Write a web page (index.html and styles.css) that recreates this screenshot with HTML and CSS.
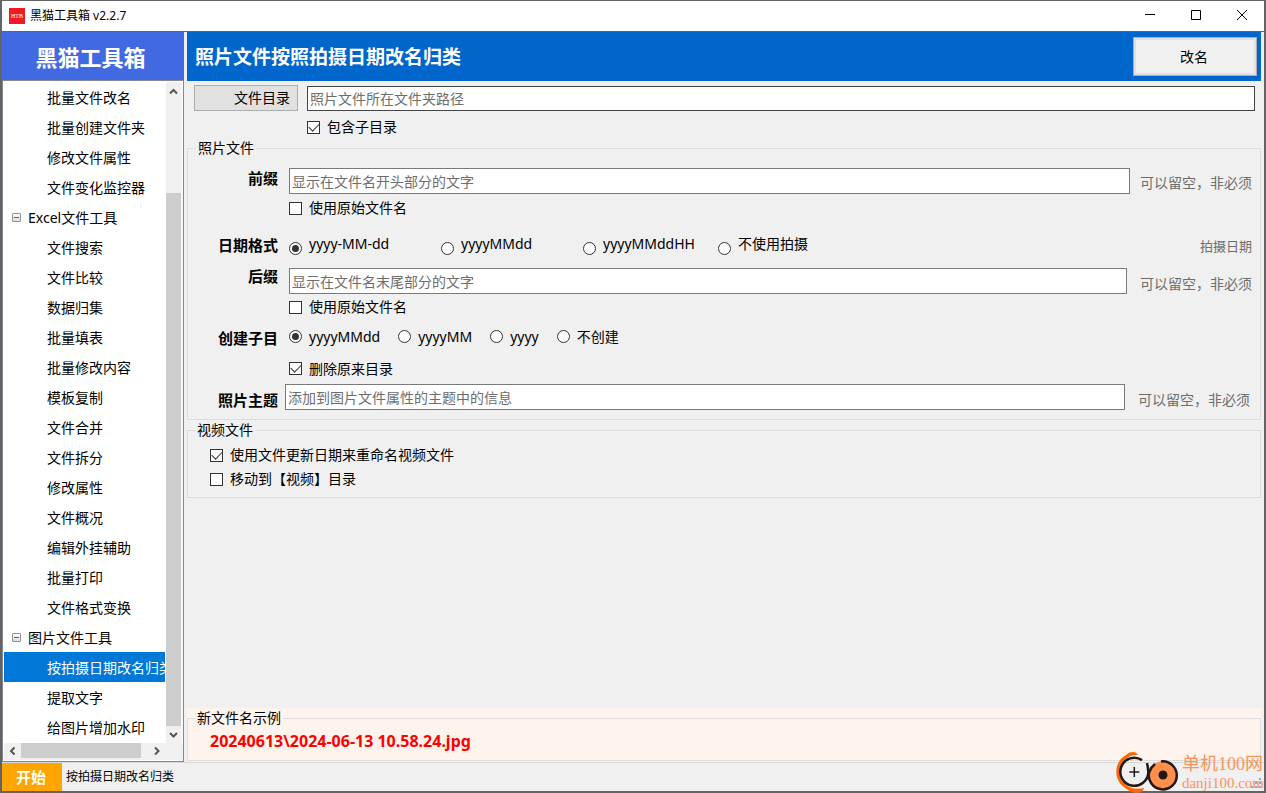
FILE: index.html
```html
<!DOCTYPE html>
<html lang="zh-CN">
<head>
<meta charset="utf-8">
<title>黑猫工具箱 v2.2.7</title>
<link rel="stylesheet" href="styles.css">
</head>
<body>
<div class="window">
  <header class="titlebar">
    <svg class="app-icon" viewBox="0 0 16 16" aria-hidden="true"><rect width="16" height="16" fill="#ed1c24"/><text x="8" y="10" text-anchor="middle" class="app-icon-text">HTB</text></svg>
    <span class="titlebar-text">黑猫工具箱 v2.2.7</span>
    <div class="caption-buttons">
      <button type="button" aria-label="最小化"><svg viewBox="0 0 12 12"><path d="M1 5.500H11"/></svg></button>
      <button type="button" aria-label="最大化"><svg viewBox="0 0 12 12"><path d="M1.500 1.500h9v9h-9z"/></svg></button>
      <button type="button" aria-label="关闭"><svg viewBox="0 0 12 12"><path d="M1 1l10 10M11 1L1 11"/></svg></button>
    </div>
  </header>

  <div class="workspace">
    <aside class="sidebar">
      <h1 class="brand">黑猫工具箱</h1>
      <div class="tree">
        <ul class="tree-list">
          <li>批量文件改名</li>
          <li>批量创建文件夹</li>
          <li>修改文件属性</li>
          <li>文件变化监控器</li>
          <li class="group"><span class="toggle"></span>Excel文件工具</li>
          <li>文件搜索</li>
          <li>文件比较</li>
          <li>数据归集</li>
          <li>批量填表</li>
          <li>批量修改内容</li>
          <li>模板复制</li>
          <li>文件合并</li>
          <li>文件拆分</li>
          <li>修改属性</li>
          <li>文件概况</li>
          <li>编辑外挂辅助</li>
          <li>批量打印</li>
          <li>文件格式变换</li>
          <li class="group"><span class="toggle"></span>图片文件工具</li>
          <li class="selected">按拍摄日期改名归类</li>
          <li>提取文字</li>
          <li>给图片增加水印</li>
        </ul>
        <div class="scroll scroll-v">
          <svg class="arrow" viewBox="0 0 17 17"><path d="M4 11.500L7.500 8l3.500 3.500"/></svg>
          <div class="track-v"><div class="thumb-v"></div></div>
          <svg class="arrow" viewBox="0 0 17 17"><path d="M4 7l3.500 3.500L11 7"/></svg>
        </div>
        <div class="scroll scroll-h">
          <svg class="arrow" viewBox="0 0 17 17"><path d="M10.500 4.500L7 8l3.500 3.500"/></svg>
          <div class="track-h"><div class="thumb-h"></div></div>
          <svg class="arrow" viewBox="0 0 17 17"><path d="M6 4.500L9.500 8L6 11.500"/></svg>
        </div>
      </div>
    </aside>

    <main class="main">
      <div class="page-head">
        <h2>照片文件按照拍摄日期改名归类</h2>
        <button type="button" class="rename">改名</button>
      </div>

      <form class="form">
        <div class="path-row">
          <button type="button" class="browse">文件目录</button>
          <input type="text" class="path" aria-label="文件目录" placeholder="照片文件所在文件夹路径">
        </div>
        <label class="check subdir"><input type="checkbox" checked>包含子目录</label>

        <fieldset class="box photo">
          <legend>照片文件</legend>
          <div class="row">
            <label class="name" for="prefix">前缀</label>
            <input type="text" id="prefix" placeholder="显示在文件名开头部分的文字">
            <span class="hint">可以留空，非必须</span>
          </div>
          <div class="row row-check">
            <label class="check field"><input type="checkbox">使用原始文件名</label>
          </div>
          <div class="row row-date" role="radiogroup" aria-labelledby="date-name">
            <span class="name" id="date-name">日期格式</span>
            <div class="dates">
              <label class="check"><input type="radio" name="date" checked><span>yyyy-MM-dd</span></label>
              <label class="check"><input type="radio" name="date"><span>yyyyMMdd</span></label>
              <label class="check"><input type="radio" name="date"><span>yyyyMMddHH</span></label>
              <label class="check"><input type="radio" name="date"><span>不使用拍摄</span></label>
            </div>
            <span class="hint hint-small">拍摄日期</span>
          </div>
          <div class="row row-suffix">
            <label class="name" for="suffix">后缀</label>
            <input type="text" id="suffix" placeholder="显示在文件名末尾部分的文字">
            <span class="hint">可以留空，非必须</span>
          </div>
          <div class="row">
            <label class="check field"><input type="checkbox">使用原始文件名</label>
          </div>
          <div class="row row-folder" role="radiogroup" aria-labelledby="folder-name">
            <span class="name" id="folder-name">创建子目</span>
            <div class="folders">
              <label class="check"><input type="radio" name="folder" checked>yyyyMMdd</label>
              <label class="check"><input type="radio" name="folder">yyyyMM</label>
              <label class="check"><input type="radio" name="folder">yyyy</label>
              <label class="check"><input type="radio" name="folder">不创建</label>
            </div>
          </div>
          <div class="row row-delete">
            <label class="check field"><input type="checkbox" checked>删除原来目录</label>
          </div>
          <div class="row row-theme">
            <label class="name" for="theme">照片主题</label>
            <input type="text" id="theme" placeholder="添加到图片文件属性的主题中的信息">
            <span class="hint">可以留空，非必须</span>
          </div>
        </fieldset>

        <fieldset class="box">
          <legend>视频文件</legend>
          <div class="video-options">
            <label class="check"><input type="checkbox" checked>使用文件更新日期来重命名视频文件</label>
            <label class="check"><input type="checkbox">移动到【视频】目录</label>
          </div>
        </fieldset>
      </form>

      <div class="example">
        <fieldset class="box">
          <legend>新文件名示例</legend>
          <output class="sample">20240613\2024-06-13 10.58.24.jpg</output>
        </fieldset>
      </div>
    </main>
  </div>

  <footer class="statusbar">
    <button type="button" class="start">开始</button>
    <span>按拍摄日期改名归类</span>
    <svg class="grip" viewBox="0 0 11 11" aria-hidden="true"><path d="M8 0h2v2H8zM4 4h2v2H4zM8 4h2v2H8zM0 8h2v2H0zM4 8h2v2H4zM8 8h2v2H8z" fill="#a5a5a5"/></svg>
  </footer>
</div>

<div class="watermark">
  <svg class="watermark-logo" viewBox="0 0 64 42" aria-hidden="true">
    <path d="M22 4C20 0 14 0 10 4C-2 10 -3 29 8 36C12 39 16 42 20 42C24 42 27 41 28 37C20 39 13 37 9 33C1 26 2 13 11 7C15 4 18 4 22 4Z" fill="#f60"/>
    <circle cx="47" cy="24" r="14" fill="#ff8f4b"/>
    <path d="M26 9.100A14 14 0 1 0 32.300 21Q32 16 31 12" fill="none" stroke="#231815" stroke-width="2.500"/>
    <path d="M18.300 16v10M13.300 21h10" stroke="#231815" stroke-width="1.500"/>
    <path d="M45 10.500A14 14 0 1 1 33.200 21Q35 16 39 13" fill="none" stroke="#231815" stroke-width="2.500"/>
    <circle cx="47" cy="24" r="4.500" fill="#231815"/>
  </svg>
  <div class="watermark-text"><span>单机100网</span><small>danji100.com</small></div>
</div>
</body>
</html>
```
FILE: styles.css
```css
* { box-sizing: border-box; }

body {
  margin: 0;
  height: 100vh;
  padding: 1px 2px 2px 1px;
  background: #636363;
  color: #000;
  font: 14px/20px "Noto Sans", "Noto Sans CJK SC", sans-serif;
  overflow: hidden;
}

button, input, output { font: inherit; color: inherit; }
h1, h2, ul { margin: 0; padding: 0; }

.window {
  display: flex;
  flex-direction: column;
  height: 100%;
  border-left: 1px solid #636363;
  background: #f0f0f0;
}

.titlebar {
  display: flex;
  align-items: center;
  flex: none;
  height: 31px;
  padding-left: 7px;
  gap: 5px;
  background: #fff;
  border-bottom: 1px solid #636363;
}
.app-icon { width: 16px; height: 16px; }
.app-icon-text { font: 6px "Liberation Serif", serif; fill: #fff; }
.titlebar-text { font-size: 12px; }
.caption-buttons { display: flex; margin-left: auto; }
.caption-buttons button {
  display: grid;
  place-items: center;
  width: 46px;
  height: 30px;
  padding: 0 0 2px 2px;
  border: 0;
  background: none;
}
.caption-buttons svg { width: 12px; height: 12px; fill: none; stroke: #000; }

.workspace {
  display: flex;
  flex: 1;
  min-height: 0;
  gap: 3px;
}

.sidebar {
  display: flex;
  flex-direction: column;
  flex: none;
  width: 182px;
}
.brand {
  flex: none;
  height: 48px;
  background: #4169e1;
  color: #fff;
  font-size: 22px;
  line-height: 50px;
  text-align: center;
  padding-right: 5px;
}
.tree {
  display: grid;
  grid-template: minmax(0, 1fr) 17px / minmax(0, 1fr) 17px;
  flex: 1;
  min-height: 0;
  border: 1px solid #828790;
  padding: 1px 0 1px 1px;
  background: #fff;
}
.tree-list { list-style: none; overflow: hidden; }
.tree-list li {
  height: 30px;
  padding-left: 43px;
  line-height: 31px;
  white-space: nowrap;
}
.tree-list .group {
  display: flex;
  align-items: center;
  gap: 7px;
  padding-left: 8px;
}
.toggle {
  display: grid;
  place-items: center;
  width: 9px;
  height: 9px;
  border: 1px solid #919191;
  border-radius: 1px;
  background: linear-gradient(#fff, #ddd);
}
.toggle::after { content: ""; width: 5px; height: 1px; background: #4b63a7; }
.tree-list .selected { background: #0078d7; color: #fff; overflow: hidden; margin-right: 1px; }

.scroll { display: flex; background: #f0f0f0; }
.scroll-v { flex-direction: column; border-right: 2px solid #f8f8f8; }
.scroll-h { grid-column: 1; }
.tree::after { content: ""; background: #f0f0f0; }
.arrow { flex: none; width: 17px; height: 17px; fill: none; stroke: #555; stroke-width: 2; }
.track-v { display: flex; flex: 1; flex-direction: column; justify-content: flex-end; }
.thumb-v { height: 85%; background: #cdcdcd; }
.track-h { flex: 1; }
.thumb-h { width: 94%; height: 15px; background: #cdcdcd; }

.main {
  display: flex;
  flex-direction: column;
  flex: 1;
  min-width: 0;
  margin-right: 3px;
}
.page-head {
  display: flex;
  align-items: center;
  justify-content: space-between;
  flex: none;
  height: 49px;
  padding: 0 4px 0 8px;
  background: #06c;
  color: #fff;
}
.page-head h2 { font-size: 19px; line-height: 28px; }
.rename {
  width: 124px;
  height: 39px;
  border: 1px solid #adadad;
  outline: 2px solid #e1e1e1;
  outline-offset: -3px;
  background: #f0f0f0;
  color: #000;
  padding: 0 2px 0 0;
}

.form { flex: 1; padding-top: 4px; }
input[type="text"] {
  min-width: 0;
  height: 26px;
  padding: 0 2px;
  border: 1px solid #7a7a7a;
  background: #fff;
}
input::placeholder { color: #6d6d6d; opacity: 1; }
.path-row { display: flex; align-items: flex-end; gap: 9px; padding: 0 6px 0 7px; }
.browse {
  width: 104px;
  height: 26px;
  padding: 0 7px;
  border: 1px solid #adadad;
  background: #e1e1e1;
  text-align: right;
}
.path-row .path { flex: 1; height: 25px; border-color: #444; }

.check { display: flex; align-items: center; gap: 7px; }
.check input {
  appearance: none;
  display: grid;
  place-items: center;
  flex: none;
  width: 13px;
  height: 13px;
  margin: 0;
  border: 1px solid #333;
  background: #fff;
}
.check input[type="radio"] { border-radius: 50%; }
.check input[type="radio"]:checked::after {
  content: "";
  width: 7px;
  height: 7px;
  border-radius: 50%;
  background: #333;
}
.check input[type="checkbox"]:checked::after {
  content: "";
  width: 9px;
  height: 5px;
  margin-bottom: 3px;
  border: solid #333;
  border-width: 0 0 1px 1px;
  transform: rotate(-45deg);
}
.subdir { width: fit-content; margin: 6px 0 0 120px; }

.box {
  min-width: 0;
  margin: 0;
  padding: 0;
  border: 1px solid #dcdcdc;
}
.box legend { height: 20px; margin-left: 7px; padding: 0 2px; }

.photo { margin-top: 1px; padding: 10px 8px 9px 1px; }
.row {
  display: grid;
  grid-template-columns: 90px minmax(0, 1fr) auto;
  align-items: center;
  column-gap: 10px;
  min-height: 26px;
}
.name { padding-right: 1px; font-size: 15px; font-weight: bold; text-align: right; align-self: start; }
.field { grid-column: 2; }
.hint { color: #6d6d6d; padding-top: 4px; }
.hint-small { font-size: 13px; padding-top: 2px; }
.row-check { min-height: 28px; }
.row-date { min-height: 46px; }
.row-date .name { align-self: center; }
.dates { display: grid; grid-template-columns: 152px 142px 135px auto; justify-content: start; line-height: 18px; }
.dates .check { align-items: flex-end; }
.dates span { padding-bottom: 2px; }
.row-suffix { column-gap: 13px; grid-template-columns: 87px minmax(0, 1fr) auto; }
.row-suffix .name { margin: -2px -3px 0 0; }
.row-suffix .hint { padding-top: 6px; }
.row-folder { min-height: 33px; }
.row-folder .name { align-self: end; padding-bottom: 5px; }
.folders { display: flex; gap: 18px; }
.row-delete { min-height: 31px; }
.row-theme { column-gap: 6px; }
.row-theme .name { align-self: end; }
.row-theme .hint { padding: 6px 2px 0 7px; }

.video-options { display: grid; gap: 4px; padding: 5px 22px 8px; }

.example { padding: 0 0 1px; background: #fff3ee; }
.sample {
  display: block;
  padding: 3px 22px 9px;
  color: #f00;
  font-size: 16px;
  font-weight: bold;
}

.statusbar {
  display: flex;
  align-items: center;
  flex: none;
  height: 29px;
  gap: 4px;
  border-top: 1px solid #d7d7d7;
  font-size: 12px;
}
.start {
  width: 60px;
  height: 28px;
  padding: 0 2px 0 0;
  border: 0;
  background: #ffa500;
  color: #fff;
  font-size: 15px;
  font-weight: bold;
}
.grip { width: 11px; height: 11px; margin: auto 2px 2px auto; }

.watermark {
  position: absolute;
  right: 2px;
  bottom: 0;
  display: flex;
  gap: 2px;
  color: #ff9257;
}
.watermark-logo { width: 64px; height: 42px; }
.watermark-text {
  display: flex;
  flex-direction: column;
  padding-top: 3px;
  font: 18px/20px "Liberation Serif", "Noto Sans CJK SC", serif;
}
.watermark-text small { font-size: 15px; line-height: 18px; }
```
